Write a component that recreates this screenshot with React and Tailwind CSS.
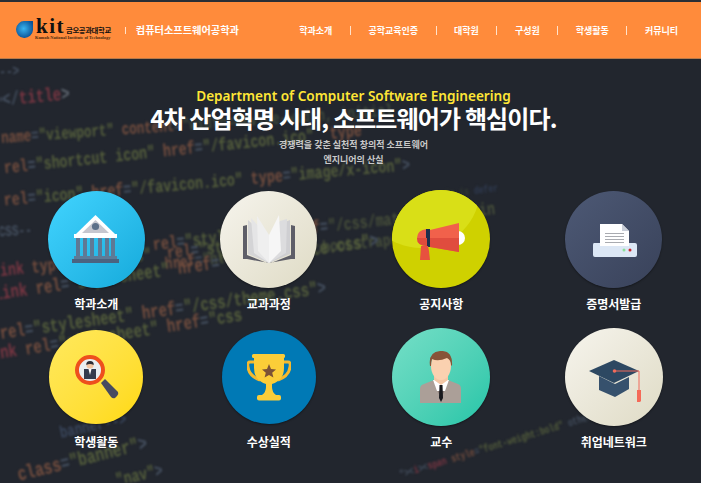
const R = "#7a3642", G = "#555f3c", O = "#754e3e", B = "#455060", W = "#5f6670";

const codeLines = [
  { x: -14, y: 66, r: -3, s: 15, t: [["ta-->", B]] },
  { x: -6, y: 92, r: -5, s: 19, t: [["></", B], ["title", R], [">", W]] },
  { x: -14, y: 131, r: -4, s: 17, t: [["a ", R], ["name", O], ["=", B], ['"viewport"', G], [" ", W], ["content", O], ["=", B], ['"width=device-width, initial', "#3f4a3c"]] },
  { x: -12, y: 161, r: -6, s: 18, t: [["a ", R], ["rel", O], ["=", B], ['"shortcut icon"', G], [" ", W], ["href", O], ["=", B], ['"/favicon.ico"', G], ["  ", W], ["type", O]] },
  { x: -12, y: 193, r: -5, s: 18, t: [["k ", R], ["rel", O], ["=", B], ['"icon"', G], [" ", W], ["href", O], ["=", B], ['"/favicon.ico"', G], [" ", W], ["type", O], ["=", B], ['"image/x-icon"', G], [">", B]] },
  { x: -8, y: 226, r: -4, s: 15, t: [["-CSS--", B]] },
  { x: 0, y: 262, r: -6, s: 18, t: [["ink ", R], ["type", O], ["=", B], ['"text/css"  ', G], ["rel", O], ["=", B], ['"style', G]] },
  { x: 153, y: 236, r: -6, s: 18, t: [["rel", O], ["=", B], ['"stylesheet"', G], [" ", W], ["href", O], ["=", B], ['"/css/materialize.min', "#474f3a"]] },
  { x: 165, y: 256, r: -6, s: 17, t: [["href", O], ["=", B], ['"https://maxcdn.bootstrapcdn.com/', "#474f3a"]] },
  { x: -6, y: 286, r: -8, s: 19, t: [["link ", R], ["rel", O], ["=", B], ['"stylesheet"', G], [" ", W], ["href", O], ["=", B], ['"/css/animate.css"', G], [">", B]] },
  { x: 0, y: 325, r: -8, s: 19, t: [["rel", O], ["=", B], ['"stylesheet"', G], [" ", W], ["href", O], ["=", B], ['"/css/theme.css"', G], [">", B]] },
  { x: -8, y: 346, r: -9, s: 19, t: [["ink ", R], ["rel", O], ["=", B], ['"stylesheet"', G], [" ", W], ["href", O], ["=", B], ['"css', G]] },
  { x: 60, y: 425, r: -12, s: 17, t: [["banner-->", "#39465c"]] },
  { x: 18, y: 466, r: -14, s: 20, t: [["class", O], ["=", B], ['"banner"', G], [">", B]] },
  { x: 116, y: 472, r: -13, s: 18, t: [['"nav"', G], [">", B]] },
  { x: 400, y: 470, r: -17, s: 11, t: [['"><', B], ["i", R], ["><", B], ["span", R], [" ", W], ["style", O], ["=", B], ['"font-weight:bold"', G], [" ", W], ["other", B]] },
  { x: 435, y: 190, r: -6, s: 11, t: [[".min.js ", "#333b33"], ["defer", "#2f3a50"]] },
];

function Backdrop() {
  return (
    <div aria-hidden="true" className="absolute inset-0 overflow-hidden blur-[1.2px] font-['Liberation_Mono',monospace] font-bold">
      {codeLines.map((l, i) => (
        <div key={i} className="absolute whitespace-pre origin-left leading-none" style={{ left: l.x, top: l.y, fontSize: l.s, transform: `rotate(${l.r}deg) scaleX(0.74)` }}>
          {l.t.map(([txt, c], j) => <span key={j} style={{ color: c }}>{txt}</span>)}
        </div>
      ))}
    </div>
  );
}

const Bank = () => (
  <svg width="48" height="49" viewBox="0 0 48 49">
    <path d="M23.5 0 L43 19 H4 Z" fill="#fff" />
    <path d="M23.5 5 L37 18 H10 Z" fill="#c6c7cf" />
    <circle cx="23.5" cy="11.5" r="3.6" fill="#5c7089" />
    <rect x="2" y="19" width="43" height="4" fill="#fff" />
    {[4, 11, 18, 26, 33, 39].map((x) => <rect key={x} x={x} y="23" width="4" height="19" fill="#5f7995" />)}
    <rect x="2" y="41" width="43" height="3" fill="#5d7b98" />
    <rect x="0" y="44" width="47" height="4" fill="#4b6380" />
  </svg>
);

const BookIcon = () => (
  <svg width="52" height="49" viewBox="0 0 52 49">
    <path d="M0 11 L4 10 V40 L24 48 H26 L4 44 L0 44Z" fill="#5e5e68" />
    <path d="M52 11 L48 10 V40 L28 48 H26 L48 44 L52 44Z" fill="#5e5e68" />
    <path d="M26 48 L5 39 V5 L26 24Z" fill="#d4d4d6" />
    <path d="M26 48 L11 38 L8 3 L26 22Z" fill="#e5e5e6" />
    <path d="M26 48 L15 36 L14 1 L26 20Z" fill="#efefef" />
    <path d="M26 48 L47 39 V5 L40 8 L26 24Z" fill="#cfcfd2" />
    <path d="M26 48 L43 38 L44 4 L37 6 L26 22Z" fill="#dcdcde" />
    <path d="M26 48 L38 36 L36 0 L26 20Z" fill="#f6f6f6" />
  </svg>
);

const Megaphone = () => (
  <svg width="50" height="38" viewBox="0 0 50 38" className="translate-x-[1px] translate-y-[3px]">
    <circle cx="41" cy="15" r="7" fill="#fff" />
    <path d="M10 15 V6 Q0 7 0 15 Q0 23 10 23Z" fill="#ee5f4d" />
    <rect x="9" y="6" width="4" height="18" fill="#1d2f4d" />
    <path d="M13 7 L42 0 V29 L13 24Z" fill="#f1614b" />
    <path d="M13 15 H42 V29 L13 24Z" fill="#e04c3e" />
    <path d="M0 15 Q0 23 10 23 V15Z" fill="#df4b3c" />
    <path d="M4 23 H11 L12 28 L13 37 H3Z" fill="#e7513f" />
  </svg>
);

const Printer = () => (
  <svg width="46" height="34" viewBox="0 0 46 34" className="translate-x-[1px] translate-y-[2px]">
    <path d="M8 0 H30 L37 7 V22 H8Z" fill="#fff" />
    <path d="M30 0 L37 7 H30Z" fill="#c9ced8" />
    {[9, 12, 15, 18].map((y) => <rect key={y} x="13" y={y} width="19" height="1" fill="#a9abb0" />)}
    <path d="M2 19 H8 V22 H37 V19 H43 Q45 19 45 21 V31 Q45 33 43 33 H3 Q1 33 1 31 V21 Q1 19 2 19Z" fill="#dce7f5" />
    <circle cx="32" cy="26" r="1.5" fill="#8ae09a" />
    <circle cx="38" cy="26" r="1.5" fill="#c7252a" />
  </svg>
);

const Magnifier = () => (
  <svg width="44" height="44" viewBox="0 0 44 44" className="translate-x-[1px]">
    <path d="M26 28 L30 24 L43 37 Q44 39 42 41 L40 43 Q38 44 36 42Z" fill="#474b60" />
    <circle cx="15" cy="15" r="13" fill="#e9eef0" stroke="#ee4f1d" strokeWidth="4" />
    <rect x="9" y="14" width="12" height="10" fill="#343b4d" />
    <path d="M13.5 14 L15 20 L16.5 14Z" fill="#fff" />
    <circle cx="15" cy="10" r="3.6" fill="#f2c5a0" />
    <path d="M11.3 10 Q11 6 15 6 Q19 6 18.7 10 Q15 8 11.3 10Z" fill="#2c2d35" />
  </svg>
);

const Trophy = () => (
  <svg width="44" height="47" viewBox="0 0 44 47">
    <path d="M9 8 H3 Q0 8 1 13 Q2 22 13 26" fill="none" stroke="#f5b92d" strokeWidth="3" />
    <path d="M35 8 H41 Q44 8 43 13 Q42 22 31 26" fill="none" stroke="#f5b92d" strokeWidth="3" />
    <path d="M7 4 H37 V14 Q37 26 25 30 V33 Q25 38 29 41 H15 Q19 38 19 33 V30 Q7 26 7 14Z" fill="#fbcd38" />
    <rect x="5" y="0" width="33" height="4" rx="1.5" fill="#fbcd38" />
    <rect x="10" y="41" width="24" height="5.5" rx="2" fill="#fbcd38" />
    <path d="M22 10 L24 15 L29 15.400 L25.200 18.700 L26.400 23.500 L22 21 L17.600 23.500 L18.800 18.700 L15 15.400 L20 15Z" fill="#7b5136" />
  </svg>
);

const Person = () => (
  <svg width="42" height="52" viewBox="0 0 42 52">
    <path d="M0 52 V38 Q0 34 4 33 L14 29 H28 L38 33 Q41 34 41 38 V52Z" fill="#ab9f98" />
    <path d="M13 29 L21 48 L29 29 L24 28 L21 38 L18 28Z" fill="#8d7f78" />
    <path d="M13 29 H29 L25 40 H17Z" fill="#fff" />
    <path d="M19.5 34 H22.5 L23 47 L21 51 L19 47Z" fill="#17181d" />
    <path d="M14 21 H28 V29 L21 34 L14 29Z" fill="#f3c7a5" />
    <ellipse cx="21" cy="15" rx="10" ry="14" fill="#fad1b0" />
    <path d="M10 15 Q8 1 20 0 Q33 -1 32 15 L31 14 Q31 9 27 7 Q18 11 12 8 Q11 11 11 15Z" fill="#875438" />
  </svg>
);

const Cap = () => (
  <svg width="52" height="42" viewBox="0 0 52 42" className="translate-x-[1px] translate-y-[4px]">
    <path d="M10 16 L26 24 L40 17 V29 L26 37 L10 30Z" fill="#36516d" />
    <path d="M25 0 L50 11 L25 23 L0 11Z" fill="#2d4862" />
    <path d="M25 11 H50 V30" fill="none" stroke="#f26b5b" strokeWidth="1" />
    <circle cx="25.500" cy="11" r="1.800" fill="#f26b5b" />
    <path d="M48 30 H52 V41 L51 42 H48Z" fill="#f56a58" />
  </svg>
);

const items = [
  { label: "학과소개", cls: "w-[97px] h-[97px] bg-gradient-to-br from-[#41d4ff] to-[#12aadb]", icon: <Bank /> },
  { label: "교과과정", cls: "w-[97px] h-[97px] bg-gradient-to-br from-[#f6f4ed] to-[#dfdbc5]", icon: <BookIcon /> },
  { label: "공지사항", cls: "w-[98px] h-[98px] bg-[#cfd100]", icon: <Megaphone />, shine: true },
  { label: "증명서발급", cls: "w-[97px] h-[97px] bg-gradient-to-br from-[#4d5975] to-[#39425a]", icon: <Printer /> },
  { label: "학생활동", cls: "w-[94px] h-[94px] bg-gradient-to-br from-[#ffe95c] to-[#ffd900]", icon: <Magnifier /> },
  { label: "수상실적", cls: "w-[94px] h-[94px] bg-[#0079b5]", icon: <Trophy /> },
  { label: "교수", cls: "w-[98px] h-[98px] bg-gradient-to-br from-[#74dfc7] to-[#1fc5a8]", icon: <Person /> },
  { label: "취업네트워크", cls: "w-[98px] h-[98px] bg-gradient-to-br from-[#f6f4ed] to-[#dfdbc5]", icon: <Cap /> },
];

const nav = ["학과소개", "공학교육인증", "대학원", "구성원", "학생활동", "커뮤니티"];

function Logo() {
  return (
    <div className="flex items-center">
      <svg width="18" height="18" viewBox="0 0 18 18" className="shrink-0">
        <defs>
          <radialGradient id="g" cx="45%" cy="45%" r="60%">
            <stop offset="0" stopColor="#39b4f0" />
            <stop offset="1" stopColor="#0a4f94" />
          </radialGradient>
        </defs>
        <path d="M9 0 H17 V9 A8.500 8.500 0 1 1 9 0Z" fill="url(#g)" />
      </svg>
      <div className="ml-[2px] flex flex-col leading-none">
        <div className="flex items-baseline h-[15px]">
          <span className="font-['Liberation_Serif',serif] font-bold text-[#111] text-[21px] tracking-[1.5px] leading-[15px]">kit</span>
          <span className="ml-[1px] font-['Noto_Sans_CJK_KR',sans-serif] font-bold text-[#111] text-[7.4px] tracking-[-0.4px] leading-[15px]">금오공과대학교</span>
        </div>
        <span className="font-['Liberation_Serif',serif] font-bold text-[#4a2a10] text-[4.4px] leading-[6px] mt-[1px] ml-[-1px] whitespace-nowrap">Kumoh National Institute of Technology</span>
      </div>
    </div>
  );
}

export default function App() {
  return (
    <div className="relative w-[701px] h-[483px] overflow-hidden bg-[#22262e] font-['Noto_Sans_CJK_KR','Noto_Sans',sans-serif]">
      <Backdrop />
      <div className="relative">
        <div className="h-[2px] bg-[#2a2e35]" />
        <header className="h-[57px] bg-[#ff8b3b] border-b border-[#b97a4a] flex items-center pl-[16px]">
          <Logo />
          <div className="ml-[14px] w-px h-[7px] bg-[#ffe2cb]" />
          <span className="ml-[10px] text-[10.2px] font-bold text-white leading-none">컴퓨터소프트웨어공학과</span>
          <nav className="ml-auto mr-[23px] flex items-center">
            {nav.map((n, i) => (
              <div key={n} className="flex items-center">
                {i > 0 && <div className="w-px h-[9px] bg-[#ffe2cb] mx-[17.5px]" />}
                <span className="text-[9px] font-bold text-white leading-none">{n}</span>
              </div>
            ))}
          </nav>
        </header>

        <section className="flex flex-col items-center pt-[27px] ml-[6px]">
          <h2 className="text-[13.6px] font-semibold text-[#ffe636] leading-[20px] font-['Noto_Sans',sans-serif] whitespace-nowrap">Department of Computer Software Engineering</h2>
          <h1 className="text-[24px] font-bold text-white leading-[26px] -mt-[1px] tracking-[-0.85px] whitespace-nowrap">4차 산업혁명 시대, 소프트웨어가 핵심이다.</h1>
          <p className="mt-[7px] text-[9px] font-bold text-[#c9c9c9] leading-[14.500px] text-center">
            경쟁력을 갖춘 실천적 창의적 소프트웨어<br />엔지니어의 산실
          </p>
        </section>

        <section className="ml-[10px] mt-[23px] w-[690px] grid grid-cols-4">
          {items.map((it) => (
            <div key={it.label} className="flex flex-col items-center h-[138px]">
              <div className="h-[98px] flex items-center justify-center">
                <div className={`relative rounded-full flex items-center justify-center overflow-hidden shadow-[0_1px_2px_rgba(0,0,0,0.4)] ${it.cls}`}>
                  {it.shine && <div className="absolute left-[-30px] top-[-60px] w-[118px] h-[118px] rounded-full bg-[#d9df17]" />}
                  <div className="relative flex">{it.icon}</div>
                </div>
              </div>
              <span className="mt-[8px] text-[12px] font-bold text-white leading-[16px] whitespace-nowrap">{it.label}</span>
            </div>
          ))}
        </section>
      </div>
    </div>
  );
}
